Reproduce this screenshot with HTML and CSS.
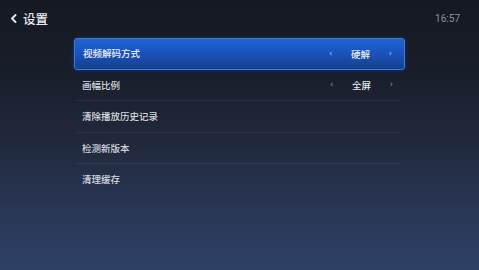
FILE: index.html
```html
<!DOCTYPE html>
<html lang="zh">
<head>
<meta charset="utf-8">
<link rel="stylesheet" href="styles.css">
</head>
<body>
<div class="screen">
  <header class="topbar">
    <div class="title">
      <svg class="back" width="7" height="9" viewBox="0 0 7 9"><path d="M5.5 1 L2 4.5 L5.5 8" fill="none" stroke="#e6e8ec" stroke-width="1.9" stroke-linecap="round" stroke-linejoin="round"/></svg>
      <span>设置</span>
    </div>
    <div class="clock">16:57</div>
  </header>
  <ul class="menu">
    <li class="item selected"><span class="label">视频解码方式</span><span class="value"><span class="arr">‹</span><span class="val">硬解</span><span class="arr">›</span></span></li>
    <li class="item"><span class="label">画幅比例</span><span class="value"><span class="arr">‹</span><span class="val">全屏</span><span class="arr">›</span></span></li>
    <li class="item"><span class="label">清除播放历史记录</span></li>
    <li class="item"><span class="label">检测新版本</span></li>
    <li class="item last"><span class="label">清理缓存</span></li>
  </ul>
</div>
</body>
</html>
```

FILE: styles.css
```css
* { box-sizing: border-box; }
html, body { margin: 0; padding: 0; }
body {
  width: 479px;
  height: 270px;
  overflow: hidden;
  font-family: "Noto Sans CJK SC", "Noto Sans", sans-serif;
  background: linear-gradient(180deg, #151922 0%, #181d29 25%, #212a3e 55%, #2a3857 80%, #2f4166 100%);
  color: #dcdfe5;
}
.screen { width: 479px; height: 270px; }
.topbar {
  height: 38px;
  display: flex;
  align-items: center;
  justify-content: space-between;
  padding: 0 19px 0 10px;
}
.title {
  display: flex;
  align-items: center;
  gap: 6px;
  font-size: 12.5px;
  font-weight: 500;
  color: #e8eaee;
  padding-bottom: 1px;
}
.back { display: block; }
.clock {
  font-family: "Roboto", "Liberation Sans", sans-serif;
  font-size: 10px;
  color: #8a909c;
  padding-bottom: 1px;
}
.menu {
  list-style: none;
  margin: 0 0 0 74px;
  padding: 0;
  width: 331px;
}
.item {
  height: 31.5px;
  display: flex;
  align-items: center;
  justify-content: space-between;
  padding: 0 12px 0 8px;
  font-size: 9.5px;
  font-weight: 500;
  color: #d6d9df;
  position: relative;
}
.item::after {
  content: "";
  position: absolute;
  left: 2px;
  right: 5px;
  bottom: 0;
  height: 1px;
  background: rgba(120, 140, 180, 0.13);
}
.item.selected::after, .item.last::after { display: none; }
.item.selected {
  background: linear-gradient(180deg, #2162d4 0%, #1a52b8 50%, #153f8c 100%);
  border: 1px solid #3c78e0;
  border-radius: 3px;
  color: #eef2fa;
  box-shadow: 0 0 4px rgba(30, 90, 200, 0.45);
}
.value {
  display: flex;
  align-items: center;
  width: 63px;
  justify-content: space-between;
}
.arr {
  font-family: "DejaVu Sans", sans-serif;
  font-size: 8px;
  color: #9aa2b4;
  line-height: 1;
}
.selected .arr { color: #b9c8ea; }
.val { font-size: 9.5px; font-weight: 500; color: #e6e9ee; }
.label { line-height: 1; }
```
